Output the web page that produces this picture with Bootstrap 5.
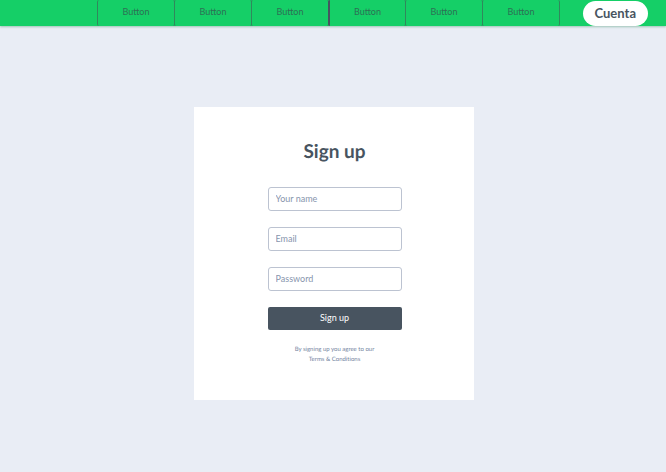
<!DOCTYPE html>
<html lang="es">
<head>
<meta charset="utf-8">
<meta name="viewport" content="width=device-width, initial-scale=1">
<title>Sign up</title>
<link rel="stylesheet" href="https://cdn.jsdelivr.net/npm/bootstrap@5.3.0/dist/css/bootstrap.min.css">
<style>
body { background: #e9edf5; color: #485460; font-family: Lato, sans-serif; text-rendering: geometricPrecision; font-variant-ligatures: none; }
.topbar { background: #15cf67; box-shadow: 0 1px 2px rgba(21, 120, 70, .35); padding-right: 18px; }
.tabs { padding-left: 97px; }
.tab-btn { width: 78px; margin-right: -1px; height: 26px; padding: 0 0 3px; border: 1px solid #31885c; border-width: 0 1px; border-radius: 2px; background: transparent; color: #2d7055; font-size: 9px; line-height: 20px; }
.tab-btn:nth-child(4) { border-left: 2px solid #485460; }
.account { height: 25px; padding: 0 12px; border: 0; background: #fff; color: #485460; font-size: 13px; line-height: 25px; font-weight: 700; }
.panel { width: 280px; padding: 33px 72px 35px 74px; border: 0; border-radius: 0; background: #fff; }
.stage { padding: 81px 0 0 1px; }
.panel h1 { font-size: 19px; line-height: 24px; font-weight: 700; margin: 0 0 23px; }
.field { height: 24px; padding: 0 7px 2px; border: 1px solid #bcc3d1; border-radius: 3px; font-size: 9px; line-height: 20px; color: #485460; min-height: 0; }
.field::placeholder { color: #8795ad; opacity: 1; }
.submit { height: 23px; padding: 0 0 2px; border: 0; border-radius: 2px; background: #485460; color: #fff; font-size: 9px; line-height: 21px; }
.terms { color: #7485a1; font-size: 6px; line-height: 10px; margin: 15px 0 0; }
.terms a { color: inherit; }
</style>
</head>
<body>
<header class="topbar d-flex justify-content-between align-items-end">
  <nav class="tabs d-flex" aria-label="Principal">
    <button type="button" class="tab-btn">Button</button>
    <button type="button" class="tab-btn">Button</button>
    <button type="button" class="tab-btn">Button</button>
    <button type="button" class="tab-btn">Button</button>
    <button type="button" class="tab-btn">Button</button>
    <button type="button" class="tab-btn">Button</button>
  </nav>
  <button type="button" class="account rounded-pill">Cuenta</button>
</header>
<main class="stage">
  <div class="panel card text-center mx-auto">
    <h1>Sign up</h1>
    <form class="d-flex flex-column gap-3">
      <input type="text" class="field form-control" placeholder="Your name" aria-label="Your name">
      <input type="email" class="field form-control" placeholder="Email" aria-label="Email">
      <input type="password" class="field form-control" placeholder="Password" aria-label="Password">
      <button type="submit" class="submit btn w-100">Sign up</button>
    </form>
    <p class="terms">By signing up you agree to our<br><a href="#" class="text-decoration-none">Terms &amp; Conditions</a></p>
  </div>
</main>
<script src="https://cdn.jsdelivr.net/npm/bootstrap@5.3.0/dist/js/bootstrap.bundle.min.js"></script>
</body>
</html>
